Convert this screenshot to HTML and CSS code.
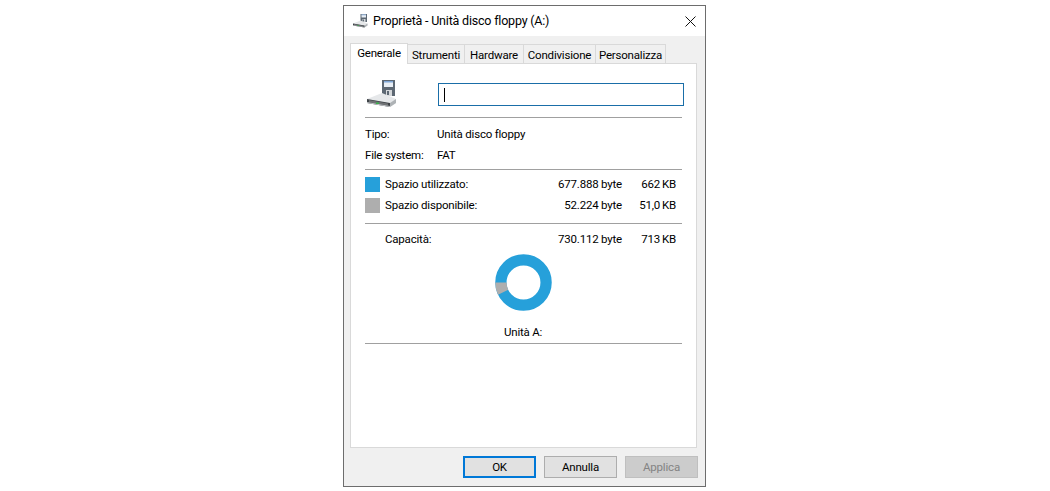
FILE: index.html
```html
<!DOCTYPE html>
<html lang="it">
<head>
    <meta charset="UTF-8">
    <title>Proprietà - Unità disco floppy (A:)</title>
    <link rel="stylesheet" href="styles.css">
</head>
<body>
    <svg class="defs" width="0" height="0">
        <symbol id="drive" viewBox="0 0 32 32">
            <rect x="17" y="2" width="13" height="16" fill="#5d6873"/>
            <rect x="19" y="3" width="9" height="6" fill="#e8eef5"/>
            <rect x="19" y="3" width="9" height="1.5" fill="#7fa6d6"/>
            <rect x="21" y="12" width="6" height="6" fill="#d5d8db"/>
            <rect x="22" y="13" width="2" height="4" fill="#5d6873"/>
            <polygon points="2,21 17,15 31,21 31,25 25,29 2,25" fill="#e6e8ea"/>
            <polygon points="25,25 31,21 31,25 25,29" fill="#aeb2b5"/>
            <polygon points="2,21 25,25 25,29 2,25" fill="#3e4347"/>
            <polygon points="4,22 23,25.4 23,27.6 4,24.2" fill="#6f7274"/>
            <polygon points="2,24 25,28 25,29 2,25" fill="#c4c7ca"/>
            <rect x="11" y="24.5" width="3" height="1.5" fill="#38b24a"/>
        </symbol>
    </svg>

    <div class="window">
        <div class="titlebar">
            <svg class="title-icon"><use href="#drive"/></svg>
            <span class="title-text">Proprietà - Unità disco floppy (A:)</span>
            <svg class="close" viewBox="0 0 11 11"><path d="M0.5 0.5L10.5 10.5M10.5 0.5L0.5 10.5" stroke="#111" fill="none"/></svg>
        </div>

        <div class="tabs">
            <div class="tab active">Generale</div>
            <div class="tab t-strumenti">Strumenti</div>
            <div class="tab t-hardware">Hardware</div>
            <div class="tab t-condivisione">Condivisione</div>
            <div class="tab t-personalizza">Personalizza</div>
        </div>

        <div class="panel">
            <div class="name-row">
                <svg class="drive-icon"><use href="#drive"/></svg>
                <div class="name-input"><span class="caret"></span></div>
            </div>
            <hr>
            <div class="info-row first"><span class="info-label">Tipo:</span><span>Unità disco floppy</span></div>
            <div class="info-row"><span class="info-label">File system:</span><span>FAT</span></div>
            <hr class="hr-a">
            <div class="space-row first">
                <span class="swatch used"></span>
                <span class="space-label">Spazio utilizzato:</span>
                <span class="bytes">677.888 byte</span>
                <span class="size">662 KB</span>
            </div>
            <div class="space-row">
                <span class="swatch free"></span>
                <span class="space-label">Spazio disponibile:</span>
                <span class="bytes">52.224 byte</span>
                <span class="size">51,0 KB</span>
            </div>
            <hr class="hr-b">
            <div class="space-row capacity">
                <span class="swatch"></span>
                <span class="space-label">Capacità:</span>
                <span class="bytes">730.112 byte</span>
                <span class="size">713 KB</span>
            </div>
            <svg class="donut" viewBox="0 0 58 58">
                <circle cx="29" cy="29" r="23" fill="none" stroke="#26a0da" stroke-width="11.5"/>
                <circle cx="29" cy="29" r="23" fill="none" stroke="#aeaeae" stroke-width="11.5" pathLength="100" stroke-dasharray="7.15 92.85" stroke-dashoffset="-42.85"/>
            </svg>
            <div class="drive-name">Unità A:</div>
            <hr class="hr-c">
        </div>

        <div class="buttons">
            <div class="btn default">OK</div>
            <div class="btn">Annulla</div>
            <div class="btn disabled">Applica</div>
        </div>
    </div>
</body>
</html>
```

FILE: styles.css
```css
body {
    margin: 0;
    padding: 5px 0 0 343px;
    background-color: #fff;
    color: #000;
    font-family: Roboto, sans-serif;
    font-size: 11.5px;
    letter-spacing: -0.2px;
    line-height: 16px;
}

.defs {
    display: block;
}

.window {
    width: 361px;
    height: 480px;
    border: 1px solid #6d6d6d;
    background-color: #f0f0f0;
}

.titlebar {
    display: flex;
    align-items: center;
    height: 30px;
    padding: 0 9px 0 8px;
    background-color: #fff;
}

.title-icon {
    width: 16px;
    height: 16px;
    margin-right: 5px;
}

.title-text {
    flex: 1;
    font-size: 12.5px;
}

.close {
    width: 11px;
    height: 11px;
}

.tabs {
    display: flex;
    align-items: flex-end;
    height: 27px;
    padding-left: 6px;
}

.tab {
    height: 18px;
    margin-left: -1px;
    border: 1px solid #d9d9d9;
    border-bottom: none;
    line-height: 20px;
    text-align: center;
}

.tab.active {
    width: 56px;
    height: 20px;
    margin-left: 0;
    margin-bottom: -1px;
    background-color: #fff;
    line-height: 18px;
    position: relative;
    z-index: 1;
}

.t-strumenti { width: 56px; }
.t-hardware { width: 58px; }
.t-condivisione { width: 71px; }
.t-personalizza { width: 69px; }

.panel {
    width: 317px;
    height: 383px;
    margin-left: 6px;
    padding: 0 14px;
    border: 1px solid #d9d9d9;
    background-color: #fff;
}

.name-row {
    display: flex;
    height: 53px;
    padding-top: 14px;
    box-sizing: border-box;
}

.drive-icon {
    flex-shrink: 0;
    width: 32px;
    height: 32px;
    margin-right: 41px;
}

.name-input {
    flex-shrink: 0;
    display: flex;
    align-items: center;
    width: 239px;
    height: 21px;
    margin-top: 5px;
    padding-left: 5px;
    border: 1px solid #1a6ea8;
}

.caret {
    width: 1px;
    height: 14px;
    background-color: #000;
}

hr {
    height: 1px;
    margin: 0;
    border: none;
    background-color: #a0a0a0;
}

.info-row {
    display: flex;
    height: 21px;
    align-items: center;
}

.info-row.first {
    margin-top: 6px;
}

.info-row span,
.space-label,
.bytes,
.size {
    padding-bottom: 2px;
}

.info-label {
    width: 72px;
}

.hr-a {
    margin-top: 3px;
}

.space-row {
    display: flex;
    align-items: center;
    height: 21px;
}

.space-row.first {
    margin-top: 4px;
}

.swatch {
    flex-shrink: 0;
    width: 15px;
    height: 15px;
    margin-right: 5px;
}

.swatch.used {
    background-color: #26a0da;
}

.swatch.free {
    background-color: #aeaeae;
}

.space-label {
    width: 130px;
}

.bytes {
    width: 107px;
    text-align: right;
}

.size {
    width: 54px;
    text-align: right;
    word-spacing: -0.7px;
}

.hr-b {
    margin-top: 7px;
}

.capacity {
    margin-top: 5px;
}

.donut {
    display: block;
    width: 57px;
    height: 57px;
    margin: 4px 0 0 130px;
}

.drive-name {
    margin-top: 13px;
    margin-left: 139px;
}

.hr-c {
    margin-top: 3px;
}

.buttons {
    display: flex;
    justify-content: flex-end;
    gap: 8px;
    padding: 8px 7px 0 0;
}

.btn {
    width: 71px;
    height: 20px;
    border: 1px solid #adadad;
    background-color: #e1e1e1;
    line-height: 20px;
    text-align: center;
}

.btn.default {
    width: 69px;
    height: 18px;
    border: 2px solid #0078d7;
    line-height: 18px;
}

.btn.disabled {
    border-color: #bfbfbf;
    background-color: #ccc;
    color: #838383;
}
```
